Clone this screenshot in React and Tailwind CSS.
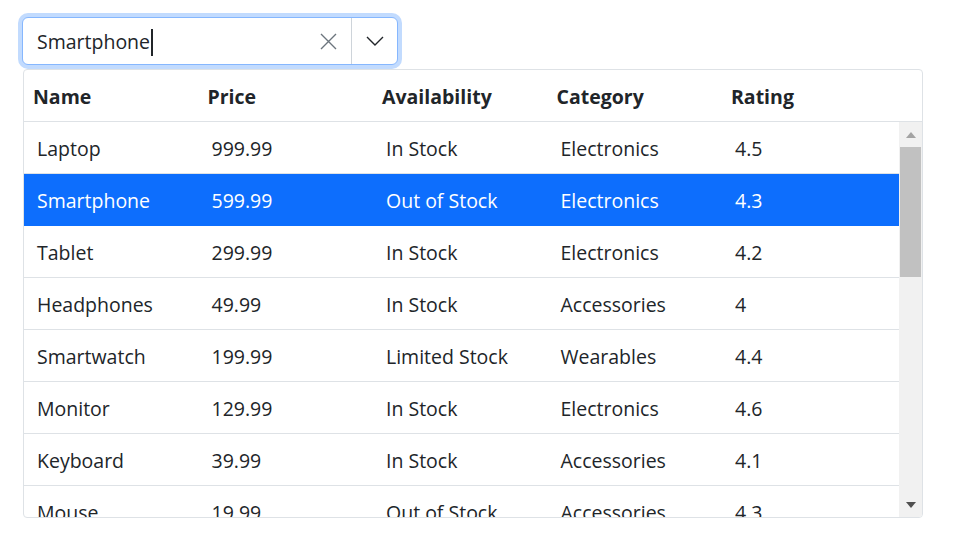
import React from 'react';

const products = [
  { name: 'Laptop', price: '999.99', availability: 'In Stock', category: 'Electronics', rating: '4.5' },
  { name: 'Smartphone', price: '599.99', availability: 'Out of Stock', category: 'Electronics', rating: '4.3' },
  { name: 'Tablet', price: '299.99', availability: 'In Stock', category: 'Electronics', rating: '4.2' },
  { name: 'Headphones', price: '49.99', availability: 'In Stock', category: 'Accessories', rating: '4' },
  { name: 'Smartwatch', price: '199.99', availability: 'Limited Stock', category: 'Wearables', rating: '4.4' },
  { name: 'Monitor', price: '129.99', availability: 'In Stock', category: 'Electronics', rating: '4.6' },
  { name: 'Keyboard', price: '39.99', availability: 'In Stock', category: 'Accessories', rating: '4.1' },
  { name: 'Mouse', price: '19.99', availability: 'Out of Stock', category: 'Accessories', rating: '4.3' },
];

const columns = ['Name', 'Price', 'Availability', 'Category', 'Rating'];

const App = () => {
  const selected = 'Smartphone';

  return (
    <div className="min-h-screen bg-white pt-[17px] pl-[22px] text-[#212529] font-['Open_Sans',sans-serif]">
      {/* Combo input */}
      <div className="w-[376px] h-[48px] rounded-md border border-[#86b7fe] shadow-[0_0_0_4px_#c2dbfe] flex items-stretch bg-white">
        <div className="flex-1 flex items-center pl-[14px] pt-[2px] text-[19.5px] leading-none">
          <span>Smartphone</span>
          <span className="w-[2px] h-[27px] bg-[#212529] ml-px"></span>
        </div>
        <div className="w-[46px] flex items-center justify-center">
          <svg width="17" height="17" viewBox="0 0 17 17" fill="none" stroke="#6c757d" strokeWidth="1.4">
            <path d="M1 1L16 16M16 1L1 16" />
          </svg>
        </div>
        <div className="w-px bg-[#ced4da]"></div>
        <div className="w-[45px] flex items-center justify-center">
          <svg width="18" height="10" viewBox="0 0 18 10" fill="none" stroke="#212529" strokeWidth="1.4">
            <path d="M1 1L9 9L17 1" />
          </svg>
        </div>
      </div>

      {/* Popup grid */}
      <div className="mt-[4px] ml-px w-[900px] h-[449px] border border-[#dee2e6] rounded-[4px] bg-white flex flex-col overflow-hidden">
        <div className="h-[52px] border-b border-[#dee2e6] shrink-0">
          <div className="grid grid-cols-[repeat(5,174.5px)] h-full items-center pt-[2px] text-[19.5px] font-bold">
            {columns.map(col => (
              <div key={col} className="pl-[9px]">{col}</div>
            ))}
          </div>
        </div>

        <div className="flex flex-1 min-h-0">
          <div className="flex-1 overflow-hidden">
            {products.map(p => {
              const isSel = p.name === selected;
              return (
                <div
                  key={p.name}
                  className={`grid grid-cols-[repeat(5,174.5px)] h-[52px] items-center pt-[2px] text-[19.5px] border-b ${isSel ? 'bg-[#0d6efd] text-white border-[#0d6efd]' : 'border-[#dee2e6]'}`}
                >
                  <div className="pl-[13px]">{p.name}</div>
                  <div className="pl-[13px]">{p.price}</div>
                  <div className="pl-[13px]">{p.availability}</div>
                  <div className="pl-[13px]">{p.category}</div>
                  <div className="pl-[13px]">{p.rating}</div>
                </div>
              );
            })}
          </div>

          {/* Scrollbar */}
          <div className="w-[23px] bg-[#f1f1f1] flex flex-col items-center shrink-0">
            <div className="h-[25px] flex items-center justify-center">
              <svg width="10" height="6" viewBox="0 0 10 6"><path d="M0 6L5 0L10 6Z" fill="#a3a3a3" /></svg>
            </div>
            <div className="w-[21px] h-[130px] bg-[#c1c1c1] mr-px"></div>
            <div className="flex-1"></div>
            <div className="h-[25px] flex items-center justify-center">
              <svg width="10" height="6" viewBox="0 0 10 6"><path d="M0 0L10 0L5 6Z" fill="#505050" /></svg>
            </div>
          </div>
        </div>
      </div>
    </div>
  );
};

export default App;
